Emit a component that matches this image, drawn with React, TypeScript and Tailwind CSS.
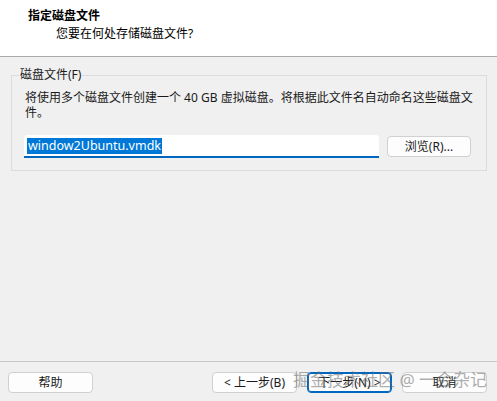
const ui = "font-['Noto_Sans','Noto_Sans_CJK_SC',sans-serif]";

function DlgButton({ label, primary = false }: { label: string; primary?: boolean }) {
  return (
    <button
      className={
        'flex h-[21px] w-[85px] items-center justify-center rounded-[4px] border bg-[#fdfdfd] text-[12px] leading-none text-[#1a1a1a] ' +
        (primary ? 'border-[#0067c0] shadow-[inset_0_0_0_1px_#0067c0]' : 'border-[#d0d0d0]')
      }
    >
      {label}
    </button>
  );
}

export default function App() {
  return (
    <div className={`relative flex h-[401px] w-[497px] flex-col overflow-hidden bg-[#f0f0f0] ${ui}`}>
      {/* wizard header */}
      <header className="h-[57px] shrink-0 border-b border-[#a9a9a9] bg-white pt-[8px]">
        <div className="pl-[28px] text-[12px] font-bold leading-[16px] text-black">指定磁盘文件</div>
        <div className="mt-[2px] pl-[56px] text-[12px] leading-[16px] text-black">您要在何处存储磁盘文件?</div>
      </header>

      {/* disk file group */}
      <fieldset className="mx-[10px] ml-[11px] mt-[10px] h-[104px] border border-[#dcdcdc] px-[7px]">
        <legend className="px-[1px] text-[12px] leading-[16px] text-[#1a1a1a]">磁盘文件(F)</legend>
        <div className="pl-[6px] pt-[7px]">
          <p className="whitespace-nowrap text-[12px] leading-[15px] text-[#1a1a1a]">
            将使用多个磁盘文件创建一个 40 GB 虚拟磁盘。将根据此文件名自动命名这些磁盘文
            <br />
            件。
          </p>
          <div className="mt-[15px] flex items-start gap-[8px]">
            <div className="-ml-[1px] flex h-[23px] w-[355px] items-center rounded-t-[3px] border-b-2 border-[#0067c0] bg-white pl-[3px]">
              <span className="h-[16px] bg-[#0078d7] px-[1px] text-[12.5px] leading-[16px] text-white">window2Ubuntu.vmdk</span>
            </div>
            <button className="mt-[1px] flex h-[21px] w-[84px] items-center justify-center rounded-[4px] border border-[#d0d0d0] bg-[#fdfdfd] text-[12px] leading-none text-[#1a1a1a]">
              浏览(R)...
            </button>
          </div>
        </div>
      </fieldset>

      <div className="flex-1" />

      {/* footer buttons */}
      <footer className="flex h-[40px] shrink-0 items-start border-t border-[#c8c8c8] px-[8px] pt-[10px] pr-[10px]">
        <DlgButton label="帮助" />
        <div className="ml-auto flex gap-[10px]">
          <DlgButton label="< 上一步(B)" />
          <DlgButton label="下一步(N) >" primary />
          <DlgButton label="取消" />
        </div>
      </footer>

      <div className="pointer-events-none absolute left-[293px] top-[369px] whitespace-nowrap text-[17px] leading-[22px] text-[rgba(105,105,105,0.55)]">
        掘金技术社区 @ 一会杂记
      </div>
    </div>
  );
}
